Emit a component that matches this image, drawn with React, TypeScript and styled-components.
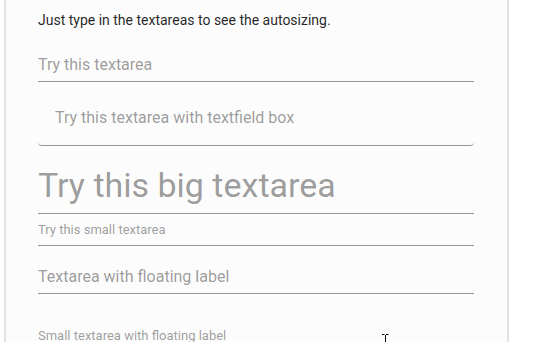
import styled, { createGlobalStyle } from "styled-components";

const GlobalStyle = createGlobalStyle`
  html, body {
    margin: 0;
    padding: 0;
    background: #fff;
    overflow: hidden;
  }
  body {
    font-family: Roboto, "Liberation Sans", sans-serif;
  }
`

const Page = styled.div`
  position: relative;
  height: 342px;
  overflow: hidden;
`

const Panel = styled.div`
  box-sizing: border-box;
  margin-left: 4px;
  width: 505px;
  min-height: 342px;
  background: #fcfcfc;
  border-left: 2px solid #e2e2e2;
  border-right: 2px solid #e2e2e2;
  padding: 12px 33px 0 32px;
  display: flex;
  flex-direction: column;
`

const Intro = styled.p`
  margin: 0;
  font-size: 14px;
  line-height: 16px;
  color: rgba(0, 0, 0, 0.87);
`

type Size = "normal" | "big" | "small";

const sizes: Record<Size, { font: number; line: number; pad: number }> = {
  normal: { font: 16, line: 20, pad: 6 },
  big: { font: 34, line: 40, pad: 8 },
  small: { font: 13, line: 16, pad: 7 },
}

const Field = styled.div<{ $gap: number; $boxed?: boolean }>`
  position: relative;
  margin-top: ${p => p.$gap}px;
  border-bottom: 1px solid rgba(0, 0, 0, 0.4);
  border-radius: ${p => (p.$boxed ? "0 0 4px 4px" : "0")};
  padding: ${p => (p.$boxed ? "18px 16px 11px 17px" : "0")};
`

const Area = styled.textarea<{ $size: Size }>`
  display: block;
  box-sizing: border-box;
  width: 100%;
  margin: 0;
  border: none;
  outline: none;
  resize: none;
  overflow: hidden;
  background: transparent;
  font-family: Roboto, "Liberation Sans", sans-serif;
  font-size: ${p => sizes[p.$size].font}px;
  line-height: ${p => sizes[p.$size].line}px;
  height: ${p => sizes[p.$size].line + sizes[p.$size].pad}px;
  padding: 0 0 ${p => sizes[p.$size].pad}px 0;
  color: rgba(0, 0, 0, 0.87);

  &::placeholder {
    color: rgba(0, 0, 0, 0.4);
    opacity: 1;
  }
`

const FloatingLabel = styled.label<{ $size: Size }>`
  position: absolute;
  left: 0;
  top: 0;
  font-size: ${p => sizes[p.$size].font}px;
  line-height: ${p => sizes[p.$size].line}px;
  color: rgba(0, 0, 0, 0.4);
  pointer-events: none;
`

const Cursor = styled.svg`
  position: absolute;
  left: 381px;
  top: 333px;
`

export default function App() {
  return (
    <Page>
      <GlobalStyle />
      <Panel>
        <Intro>Just type in the textareas to see the autosizing.</Intro>
        <Field $gap={27}>
          <Area $size="normal" rows={1} placeholder="Try this textarea" />
        </Field>
        <Field $gap={8} $boxed>
          <Area $size="normal" rows={1} placeholder="Try this textarea with textfield box" />
        </Field>
        <Field $gap={19}>
          <Area $size="big" rows={1} placeholder="Try this big textarea" />
        </Field>
        <Field $gap={8}>
          <Area $size="small" rows={1} placeholder="Try this small textarea" />
        </Field>
        <Field $gap={21}>
          <FloatingLabel $size="normal" htmlFor="floating">Textarea with floating label</FloatingLabel>
          <Area $size="normal" rows={1} id="floating" />
        </Field>
        <Field $gap={34}>
          <FloatingLabel $size="small" htmlFor="floating-small">Small textarea with floating label</FloatingLabel>
          <Area $size="small" rows={1} id="floating-small" />
        </Field>
      </Panel>
      <Cursor width="9" height="10" viewBox="0 0 9 10">
        <path d="M1 1.5h2.5M5 1.5h2.5M4.5 2v8" stroke="#000" strokeWidth="1" fill="none" />
      </Cursor>
    </Page>
  );
}
